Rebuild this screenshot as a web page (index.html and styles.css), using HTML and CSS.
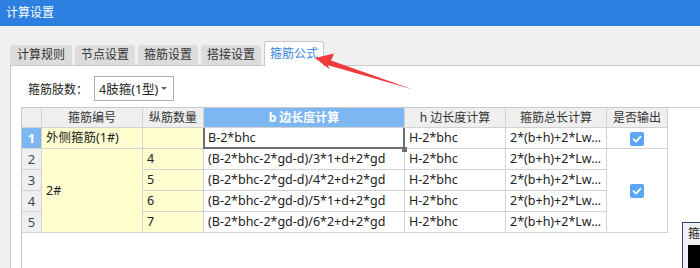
FILE: index.html
```html
<!DOCTYPE html>
<html lang="zh">
<head>
<meta charset="UTF-8" />
<title>计算设置</title>
<link rel="stylesheet" href="styles.css">
</head>
<body>

<div class="titlebar">计算设置</div>

<div class="tabs">
  <div class="tab first">计算规则</div>
  <div class="tab">节点设置</div>
  <div class="tab">箍筋设置</div>
  <div class="tab">搭接设置</div>
  <div class="tab active">箍筋公式</div>
</div>

<div class="panel">
  <div class="toolbar">
    <span class="label">箍筋肢数：</span>
    <div class="select">
      <span>4肢箍(1型)</span>
      <span class="caret"></span>
    </div>
  </div>

  <div class="grid">
    <table>
      <colgroup>
        <col class="c-num">
        <col class="c-id">
        <col class="c-count">
        <col class="c-b">
        <col class="c-h">
        <col class="c-total">
        <col class="c-out">
      </colgroup>
      <thead>
        <tr>
          <th></th>
          <th>箍筋编号</th>
          <th>纵筋数量</th>
          <th class="current">b 边长度计算</th>
          <th>h 边长度计算</th>
          <th>箍筋总长计算</th>
          <th>是否输出</th>
        </tr>
      </thead>
      <tbody>
        <tr>
          <td class="num current">1</td>
          <td class="yellow">外侧箍筋(1#)</td>
          <td class="yellow"></td>
          <td class="selected">B-2*bhc<span class="handle"></span></td>
          <td>H-2*bhc</td>
          <td>2*(b+h)+2*Lw...</td>
          <td class="center"><span class="check"><svg viewBox="0 0 14 14"><path d="M3.5 7.2 L6 9.6 L10.6 4.6" /></svg></span></td>
        </tr>
        <tr>
          <td class="num">2</td>
          <td class="yellow" rowspan="4">2#</td>
          <td class="yellow">4</td>
          <td>(B-2*bhc-2*gd-d)/3*1+d+2*gd</td>
          <td>H-2*bhc</td>
          <td>2*(b+h)+2*Lw...</td>
          <td class="center" rowspan="4"><span class="check"><svg viewBox="0 0 14 14"><path d="M3.5 7.2 L6 9.6 L10.6 4.6" /></svg></span></td>
        </tr>
        <tr>
          <td class="num">3</td>
          <td class="yellow">5</td>
          <td>(B-2*bhc-2*gd-d)/4*2+d+2*gd</td>
          <td>H-2*bhc</td>
          <td>2*(b+h)+2*Lw...</td>
        </tr>
        <tr>
          <td class="num">4</td>
          <td class="yellow">6</td>
          <td>(B-2*bhc-2*gd-d)/5*1+d+2*gd</td>
          <td>H-2*bhc</td>
          <td>2*(b+h)+2*Lw...</td>
        </tr>
        <tr>
          <td class="num">5</td>
          <td class="yellow">7</td>
          <td>(B-2*bhc-2*gd-d)/6*2+d+2*gd</td>
          <td>H-2*bhc</td>
          <td>2*(b+h)+2*Lw...</td>
        </tr>
      </tbody>
    </table>
  </div>
</div>

<!-- floating panel clipped at the window edge -->
<div class="float-box">
  <div class="float-title">箍</div>
  <div class="float-black"></div>
</div>

<!-- red annotation arrow -->
<svg class="arrow" width="700" height="268" viewBox="0 0 700 268">
  <polygon points="315,58 334,53.5 331,60.5 413,89.5 327.5,65 330,69.5" fill="#f23a3a" />
</svg>

</body>
</html>
```

FILE: styles.css
```css
* {
  box-sizing: border-box;
}
body {
  margin: 0;
  width: 700px;
  height: 268px;
  overflow: hidden;
  position: relative;
  background: #f0f0f0;
  color: #222;
  font-family: "Noto Sans", "Noto Sans CJK SC", sans-serif;
  font-size: 12px;
}
.titlebar {
  height: 26px;
  line-height: 25px;
  padding-left: 6px;
  background: #2d80e0;
  color: #fff;
  font-size: 12px;
}
.tabs {
  display: flex;
  align-items: flex-end;
  gap: 3px;
  height: 39px;
  padding-left: 10px;
}
.tab {
  height: 20px;
  line-height: 20px;
  padding: 0 6px;
  background: #dcdcdc;
  color: #333;
  border-radius: 3px 3px 0 0;
}
.tab.first {
  padding: 0 7px;
}
.tab.active {
  height: 25px;
  line-height: 23px;
  margin-bottom: -1px;
  padding: 0 5px;
  background: #fff;
  color: #3585e2;
  border: 1px solid #c8c8c8;
  border-bottom: none;
  position: relative;
  z-index: 1;
}
.panel {
  margin-left: 10px;
  height: 203px;
  background: #fff;
  border-top: 1px solid #c8c8c8;
  border-left: 1px solid #c8c8c8;
}
.toolbar {
  display: flex;
  align-items: center;
  margin-top: 10px;
  padding-left: 17px;
  height: 25px;
}
.label {
  width: 66px;
  color: #222;
}
.select {
  display: flex;
  align-items: center;
  justify-content: space-between;
  width: 80px;
  height: 25px;
  padding: 0 6px 0 4px;
  border: 1px solid #adadad;
  color: #222;
  font-size: 12.5px;
}
.caret {
  width: 0;
  height: 0;
  border-left: 3px solid transparent;
  border-right: 3px solid transparent;
  border-top: 3px solid #666;
}
.grid {
  margin-top: 6px;
  margin-left: 10px;
  height: 161px;
  border-top: 1px solid #c8c8c8;
  border-left: 1px solid #c8c8c8;
}
table {
  border-collapse: separate;
  border-spacing: 0;
  table-layout: fixed;
  width: 646px;
}
.c-num { width: 20px; }
.c-id { width: 101px; }
.c-count { width: 61px; }
.c-b { width: 201px; }
.c-h { width: 101px; }
.c-total { width: 101px; }
.c-out { width: 61px; }
thead tr {
  height: 20px;
}
tbody tr {
  height: 21px;
}
th, td {
  padding: 0 0 0 4px;
  border-right: 1px solid #d2d2d2;
  border-bottom: 1px solid #d2d2d2;
  white-space: nowrap;
  overflow: hidden;
  line-height: 18px;
}
td {
  font-size: 12.5px;
}
th {
  padding: 0;
  background: #efefef;
  color: #333;
  font-weight: normal;
  text-align: center;
}
th.current {
  background: #7db7f2;
  color: #fff;
  font-weight: bold;
}
td.num {
  padding: 0;
  background: #efefef;
  color: #444;
  font-size: 13px;
  text-align: center;
}
td.num.current {
  background: #7db7f2;
  color: #fff;
  font-weight: bold;
}
td.yellow {
  background: #ffffd0;
}
td.center {
  padding: 0;
  text-align: center;
}
td.selected {
  position: relative;
  overflow: visible;
}
td.selected::after {
  content: "";
  position: absolute;
  top: 0;
  left: -1px;
  right: -1px;
  bottom: -1px;
  border: 2px solid #6f6f6f;
  border-top: none;
}
.handle {
  position: absolute;
  right: -3px;
  bottom: -4px;
  width: 5px;
  height: 5px;
  background: #6f6f6f;
  z-index: 2;
}
.check {
  display: inline-block;
  width: 14px;
  height: 14px;
  border-radius: 2px;
  background: #5ca4f6;
  vertical-align: middle;
}
.check svg {
  display: block;
  width: 14px;
  height: 14px;
}
.check path {
  fill: none;
  stroke: #fff;
  stroke-width: 1.8;
  stroke-linecap: round;
  stroke-linejoin: round;
}
.float-box {
  position: absolute;
  left: 682px;
  top: 222px;
  width: 30px;
  height: 46px;
  background: #f0f0f0;
  border: 1px solid #2b4570;
  border-bottom: none;
  padding: 3px 0 0 5px;
}
.float-title {
  line-height: 16px;
  color: #222;
}
.float-black {
  margin-top: 3px;
  height: 24px;
  background: #000;
}
.arrow {
  position: absolute;
  left: 0;
  top: 0;
  z-index: 5;
  pointer-events: none;
}
```
